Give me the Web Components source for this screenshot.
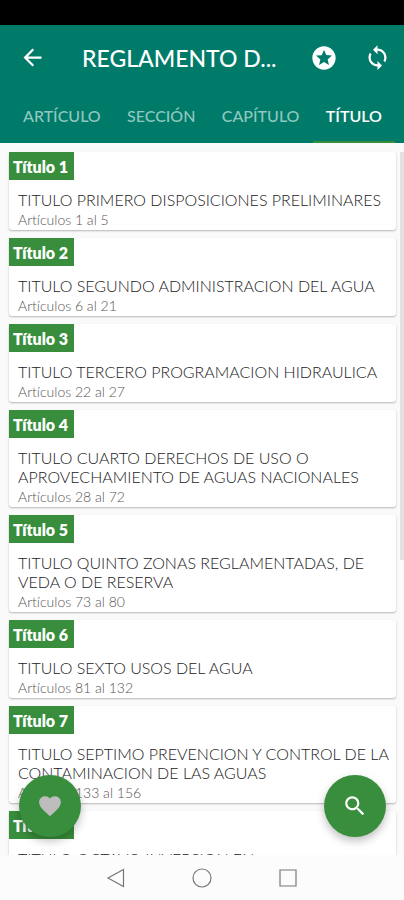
<!DOCTYPE html>
<html lang="es">
<head>
<meta charset="utf-8">
<meta name="viewport" content="width=device-width, initial-scale=1">
<title>Reglamento</title>
<style>
  html, body { height: 100%; }
  body { margin: 0; font-family: Lato, "Noto Sans", sans-serif; font-variant-ligatures: none; background: #fafafa; }
</style>
</head>
<body>
<reader-app></reader-app>

<template id="app-tpl">
  <style>
    :host { display: flex; flex-direction: column; height: 100vh; overflow: hidden; }
    .status { flex: none; height: 25px; background: #000; }
    header { flex: none; background: #007a69; }
    main { flex: 1; min-height: 0; position: relative; overflow: hidden; }
    .list { display: flex; flex-direction: column; gap: 8px; padding: 9px 8px 0 9px; }
    .thumb { position: absolute; top: 9px; right: 0; width: 4px; height: 408px; background: #e2e2e2; }
    floating-button { position: absolute; bottom: 18px; }
    .left { left: 19px; color: #bdbdbd; }
    .right { right: 18px; color: #fff; }
  </style>
  <div class="status"></div>
  <header>
    <title-bar>REGLAMENTO D...</title-bar>
    <tab-strip></tab-strip>
  </header>
  <main>
    <div class="list">
      <title-card label="Título 1" range="Artículos 1 al 5">TITULO PRIMERO DISPOSICIONES PRELIMINARES</title-card>
      <title-card label="Título 2" range="Artículos 6 al 21">TITULO SEGUNDO ADMINISTRACION DEL AGUA</title-card>
      <title-card label="Título 3" range="Artículos 22 al 27">TITULO TERCERO PROGRAMACION HIDRAULICA</title-card>
      <title-card label="Título 4" range="Artículos 28 al 72">TITULO CUARTO DERECHOS DE USO O APROVECHAMIENTO DE AGUAS NACIONALES</title-card>
      <title-card label="Título 5" range="Artículos 73 al 80">TITULO QUINTO ZONAS REGLAMENTADAS, DE VEDA O DE RESERVA</title-card>
      <title-card label="Título 6" range="Artículos 81 al 132">TITULO SEXTO USOS DEL AGUA</title-card>
      <title-card label="Título 7" range="Artículos 133 al 156">TITULO SEPTIMO PREVENCION Y CONTROL DE LA CONTAMINACION DE LAS AGUAS</title-card>
      <title-card label="Título 8">TITULO OCTAVO INVERSION EN</title-card>
    </div>
    <div class="thumb"></div>
    <floating-button class="left" label="Favoritos">
      <svg width="26" height="26" viewBox="0 0 24 24" fill="currentColor"><path d="M12 21.35l-1.45-1.32C5.4 15.36 2 12.28 2 8.5 2 5.42 4.42 3 7.5 3c1.74 0 3.41.81 4.5 2.09C13.09 3.81 14.76 3 16.5 3 19.58 3 22 5.42 22 8.5c0 3.78-3.4 6.86-8.55 11.54L12 21.35z"/></svg>
    </floating-button>
    <floating-button class="right" label="Buscar">
      <svg width="26" height="26" viewBox="0 0 24 24" fill="currentColor"><path d="M15.5 14h-.79l-.28-.27C15.41 12.59 16 11.11 16 9.5 16 5.91 13.09 3 9.5 3S3 5.91 3 9.5 5.91 16 9.5 16c1.61 0 3.09-.59 4.23-1.57l.27.28v.79l5 4.99L20.49 19l-4.99-5zm-6 0C7.01 14 5 11.99 5 9.5S7.01 5 9.5 5 14 7.01 14 9.5 11.99 14 9.5 14z"/></svg>
    </floating-button>
  </main>
  <nav-keys></nav-keys>
</template>

<template id="bar-tpl">
  <style>
    :host { display: flex; align-items: center; height: 65px; padding: 0 13px 0 19px; color: #fff; }
    button { flex: none; display: flex; padding: 0; border: 0; background: none; color: inherit; }
    h1 { flex: 1; min-width: 0; margin: 0 0 0 36px; font-size: 23px; line-height: 28px; font-weight: 500; white-space: nowrap; }
    .actions { flex: none; display: flex; gap: 26px; }
  </style>
  <button aria-label="Volver"><svg width="27" height="27" viewBox="0 0 24 24" fill="currentColor"><path d="M20 11H7.83l5.59-5.59L12 4l-8 8 8 8 1.41-1.41L7.83 13H20v-2z"/></svg></button>
  <h1><slot></slot></h1>
  <div class="actions">
    <button aria-label="Destacados"><svg width="28" height="28" viewBox="0 0 24 24" fill="currentColor"><path d="M11.99 2C6.47 2 2 6.48 2 12s4.47 10 9.99 10C17.52 22 22 17.52 22 12S17.52 2 11.99 2zm4.24 16L12 15.45 7.77 18l1.12-4.81-3.73-3.23 4.92-.42L12 5l1.92 4.53 4.92.42-3.73 3.23L16.23 18z"/></svg></button>
    <button aria-label="Sincronizar"><svg width="27" height="27" viewBox="0 0 24 24" fill="currentColor"><path d="M12 4V1L8 5l4 4V6c3.31 0 6 2.69 6 6 0 1.01-.25 1.97-.7 2.8l1.46 1.46C19.54 15.03 20 13.57 20 12c0-4.42-3.58-8-8-8zm0 14c-3.31 0-6-2.69-6-6 0-1.01.25-1.97.7-2.8L5.24 7.74C4.46 8.97 4 10.43 4 12c0 4.42 3.58 8 8 8v3l4-4-4-4v3z"/></svg></button>
  </div>
</template>

<template id="tabs-tpl">
  <style>
    :host { display: flex; justify-content: space-between; padding: 0 9px 0 10px; }
    button { height: 53px; padding: 0 13px; border: 0; border-bottom: 2px solid transparent; background: none;
      font: 500 16px/20px Lato, "Noto Sans", sans-serif; color: #8fc8bf; white-space: nowrap; }
    button[aria-selected="true"] { color: #fff; font-weight: 600; border-bottom-color: #388e3c; }
  </style>
  <button role="tab" aria-selected="false">ARTÍCULO</button>
  <button role="tab" aria-selected="false">SECCIÓN</button>
  <button role="tab" aria-selected="false">CAPÍTULO</button>
  <button role="tab" aria-selected="true">TÍTULO</button>
</template>

<template id="card-tpl">
  <style>
    :host { display: block; background: #fff; border-radius: 3px; box-shadow: 0 1px 2px rgba(0,0,0,.28); }
    .badge { display: inline-block; vertical-align: top; min-width: 58px; padding: 2px 3px 0 4px; background: #388e3c; color: #fff; font-weight: 800; font-size: 16px; line-height: 26px; }
    .body { padding: 10px 4px 0 9px; }
    h2 { margin: 0; font-weight: 300; font-size: 16px; line-height: 19px; color: #222; }
    p { margin: 0; min-height: 21px; font-weight: 300; font-size: 14px; line-height: 21px; color: #555; }
  </style>
  <div class="badge"></div>
  <div class="body">
    <h2><slot></slot></h2>
    <p></p>
  </div>
</template>

<template id="fab-tpl">
  <style>
    :host { display: block; }
    button { display: flex; align-items: center; justify-content: center; width: 62px; height: 62px; padding: 0; border: 0;
      border-radius: 50%; background: #388e3c; color: inherit; box-shadow: 0 4px 8px rgba(0,0,0,.25); }
  </style>
  <button><slot></slot></button>
</template>

<template id="keys-tpl">
  <style>
    :host { flex: none; display: flex; justify-content: center; gap: 66px; height: 45px; background: #fcfcfc; }
    button { display: flex; align-items: center; padding: 0; border: 0; background: none; }
    svg { fill: none; stroke: #777; stroke-width: 1.2; }
  </style>
  <button aria-label="Atrás"><svg width="20" height="20" viewBox="0 0 20 20"><path d="M17.5 1.5v17L2 10z"/></svg></button>
  <button aria-label="Inicio"><svg width="20" height="20" viewBox="0 0 20 20"><circle cx="10" cy="10" r="9"/></svg></button>
  <button aria-label="Recientes"><svg width="20" height="20" viewBox="0 0 20 20"><path d="M2 2h16v16H2z"/></svg></button>
</template>

<script>
  class Base extends HTMLElement {
    constructor() {
      super();
      this.attachShadow({ mode: "open" })
        .append(document.getElementById(this.constructor.tpl).content.cloneNode(true));
    }
  }
  class TitleBar extends Base { static tpl = "bar-tpl"; }
  class TabStrip extends Base {
    static tpl = "tabs-tpl";
    connectedCallback() { this.setAttribute("role", "tablist"); }
  }
  class TitleCard extends Base {
    static tpl = "card-tpl";
    connectedCallback() {
      this.shadowRoot.querySelector(".badge").textContent = this.getAttribute("label");
      this.shadowRoot.querySelector("p").textContent = this.getAttribute("range") || "";
    }
  }
  class FloatingButton extends Base {
    static tpl = "fab-tpl";
    connectedCallback() { this.shadowRoot.querySelector("button").setAttribute("aria-label", this.getAttribute("label")); }
  }
  class NavKeys extends Base { static tpl = "keys-tpl"; }
  class ReaderApp extends Base { static tpl = "app-tpl"; }
  customElements.define("title-bar", TitleBar);
  customElements.define("tab-strip", TabStrip);
  customElements.define("title-card", TitleCard);
  customElements.define("floating-button", FloatingButton);
  customElements.define("nav-keys", NavKeys);
  customElements.define("reader-app", ReaderApp);
</script>
</body>
</html>
